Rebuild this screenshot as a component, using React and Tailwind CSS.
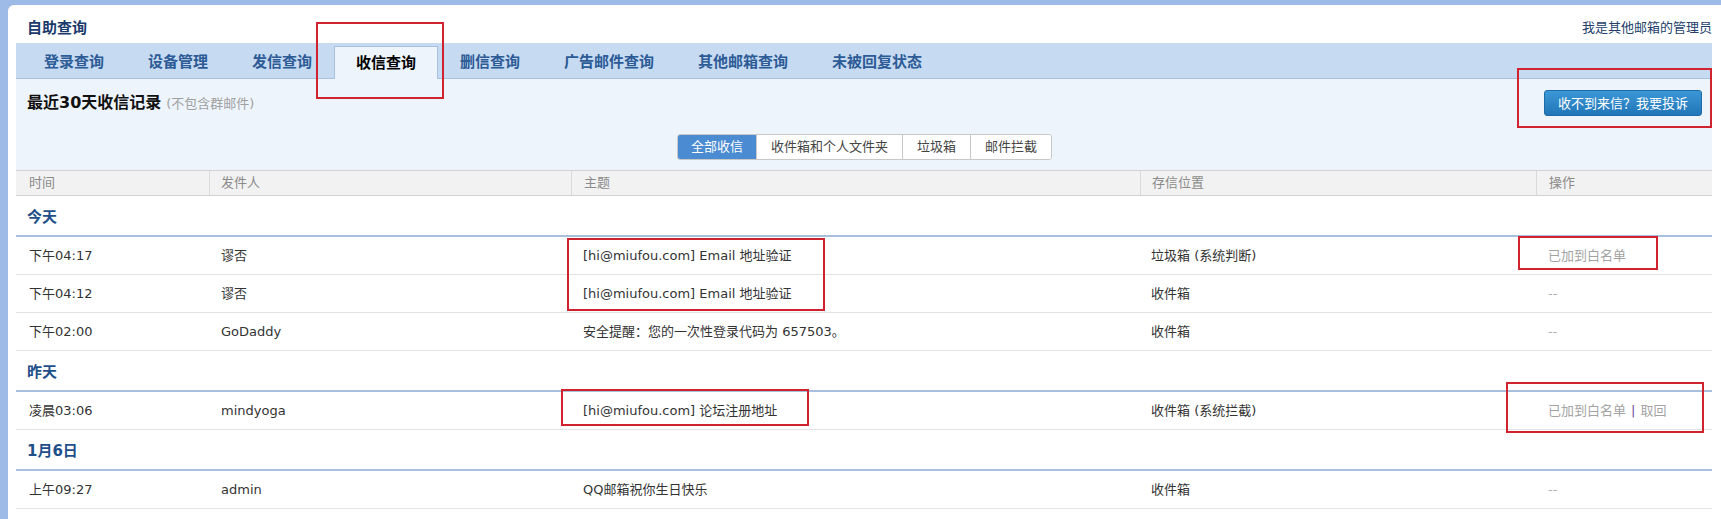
import React from 'react';

const tabs = ['登录查询', '设备管理', '发信查询', '收信查询', '删信查询', '广告邮件查询', '其他邮箱查询', '未被回复状态'];

const sections = [
  {
    title: '今天',
    rows: [
      ['下午04:17', '谬否', '[hi@miufou.com] Email 地址验证', '垃圾箱 (系统判断)', 'added'],
      ['下午04:12', '谬否', '[hi@miufou.com] Email 地址验证', '收件箱', 'none'],
      ['下午02:00', 'GoDaddy', '安全提醒：您的一次性登录代码为 657503。', '收件箱', 'none'],
    ],
  },
  {
    title: '昨天',
    rows: [['凌晨03:06', 'mindyoga', '[hi@miufou.com] 论坛注册地址', '收件箱 (系统拦截)', 'retrieve']],
  },
  {
    title: '1月6日',
    rows: [['上午09:27', 'admin', 'QQ邮箱祝你生日快乐', '收件箱', 'none']],
  },
];

const filters = ['全部收信', '收件箱和个人文件夹', '垃圾箱', '邮件拦截'];

function Op({ kind }) {
  if (kind === 'added') return <span className="text-[#a3a3a3]">已加到白名单</span>;
  if (kind === 'retrieve')
    return (
      <span className="text-[#a3a3a3]">
        已加到白名单<span className="mx-[5px] text-[#6b4c9a]">|</span>取回
      </span>
    );
  return <span className="text-[#b0b0b0]">--</span>;
}

export default function App() {
  return (
    <div className="relative w-[1721px] h-[519px] overflow-hidden bg-[#9dbbe6] font-['DejaVu_Sans','Noto_Sans_CJK_SC',sans-serif]">
      <div className="pt-[5px] pl-[8px] h-full">
        <div className="bg-white rounded-tl-[6px] h-[514px] pl-[8px] pr-[9px]">
          {/* Title row */}
          <div className="h-[38px] pt-[8px] pl-[11px] flex items-center justify-between">
            <span className="text-[15px] leading-[20px] font-bold text-[#1b3a6b]">自助查询</span>
            <span className="text-[13px] leading-[18px] text-[#243f6c]">我是其他邮箱的管理员</span>
          </div>

          {/* Tab bar */}
          <div className="h-[36px] bg-[#c6daf1] border-b border-[#a9c1df] flex items-end pl-[6px]">
            {tabs.map((t) =>
              t === '收信查询' ? (
                <div
                  key={t}
                  className="h-[33px] -mb-px px-[21px] flex items-center bg-[#eef4fc] border-t border-x border-[#a9c1df] text-[15px] font-bold text-black"
                >
                  {t}
                </div>
              ) : (
                <div key={t} className="h-[32px] px-[22px] flex items-center text-[15px] font-bold text-[#2c5b96]">
                  {t}
                </div>
              )
            )}
          </div>

          {/* Panel */}
          <div className="bg-[#eef4fc] pt-[11px] pb-[10px] pl-[11px] pr-[10px]">
            <div className="h-[26px] flex items-center justify-between">
              <div className="flex items-baseline gap-[5px]">
                <span className="text-[16px] font-bold text-[#111]">最近30天收信记录</span>
                <span className="text-[13px] text-[#a0a0a0]">(不包含群邮件)</span>
              </div>
              <button className="h-[26px] px-[13px] rounded-[3px] border border-[#1f6aa8] bg-gradient-to-b from-[#3b97d6] to-[#2176b7] text-white text-[13px] leading-none">
                收不到来信？我要投诉
              </button>
            </div>
            <div className="mt-[18px] h-[26px] flex justify-center">
              <div className="flex rounded-[3px] overflow-hidden border border-[#c8c8c8]">
                {filters.map((f, i) =>
                  i === 0 ? (
                    <div key={f} className="px-[13px] flex items-center bg-[#4a8bd1] text-white text-[13px]">
                      {f}
                    </div>
                  ) : (
                    <div key={f} className="px-[14px] flex items-center bg-white border-l border-[#c8c8c8] text-[#444] text-[13px]">
                      {f}
                    </div>
                  )
                )}
              </div>
            </div>
          </div>

          {/* Table header */}
          <div className="grid grid-cols-[193px_362px_569px_396px_1fr] h-[26px] bg-[#f2f2f2] border-y border-[#d2d2d2] text-[13px] text-[#8a8a8a]">
            <div className="pl-[13px] flex items-center">时间</div>
            <div className="pl-[11px] flex items-center border-l border-[#dadada]">发件人</div>
            <div className="pl-[12px] flex items-center border-l border-[#dadada]">主题</div>
            <div className="pl-[11px] flex items-center border-l border-[#dadada]">存信位置</div>
            <div className="pl-[12px] flex items-center border-l border-[#dadada]">操作</div>
          </div>

          {/* Sections */}
          {sections.map((s) => (
            <div key={s.title}>
              <div className="h-[41px] pt-[4px] pl-[11px] flex items-center border-b-2 border-[#a8c0dd] text-[15px] font-bold text-[#1f4f8a]">
                {s.title}
              </div>
              {s.rows.map((r, i) => (
                <div
                  key={i}
                  className="grid grid-cols-[193px_362px_569px_396px_1fr] h-[38px] border-b border-[#e3e3e3] text-[13px] text-[#333]"
                >
                  <div className="pl-[13px] flex items-center">{r[0]}</div>
                  <div className="pl-[12px] flex items-center">{r[1]}</div>
                  <div className="pl-[12px] flex items-center">{r[2]}</div>
                  <div className="pl-[11px] flex items-center">{r[3]}</div>
                  <div className="pl-[12px] flex items-center">
                    <Op kind={r[4]} />
                  </div>
                </div>
              ))}
            </div>
          ))}
        </div>
      </div>

      {/* Red annotation boxes */}
      <div className="absolute left-[316px] top-[22px] w-[128px] h-[77px] border-2 border-[#d0232d]" />
      <div className="absolute left-[1517px] top-[68px] w-[195px] h-[60px] border-2 border-[#d0232d]" />
      <div className="absolute left-[567px] top-[238px] w-[258px] h-[73px] border-2 border-[#d0232d]" />
      <div className="absolute left-[1518px] top-[236px] w-[140px] h-[34px] border-2 border-[#d0232d]" />
      <div className="absolute left-[561px] top-[389px] w-[248px] h-[37px] border-2 border-[#d0232d]" />
      <div className="absolute left-[1506px] top-[382px] w-[198px] h-[51px] border-2 border-[#d0232d]" />
    </div>
  );
}
